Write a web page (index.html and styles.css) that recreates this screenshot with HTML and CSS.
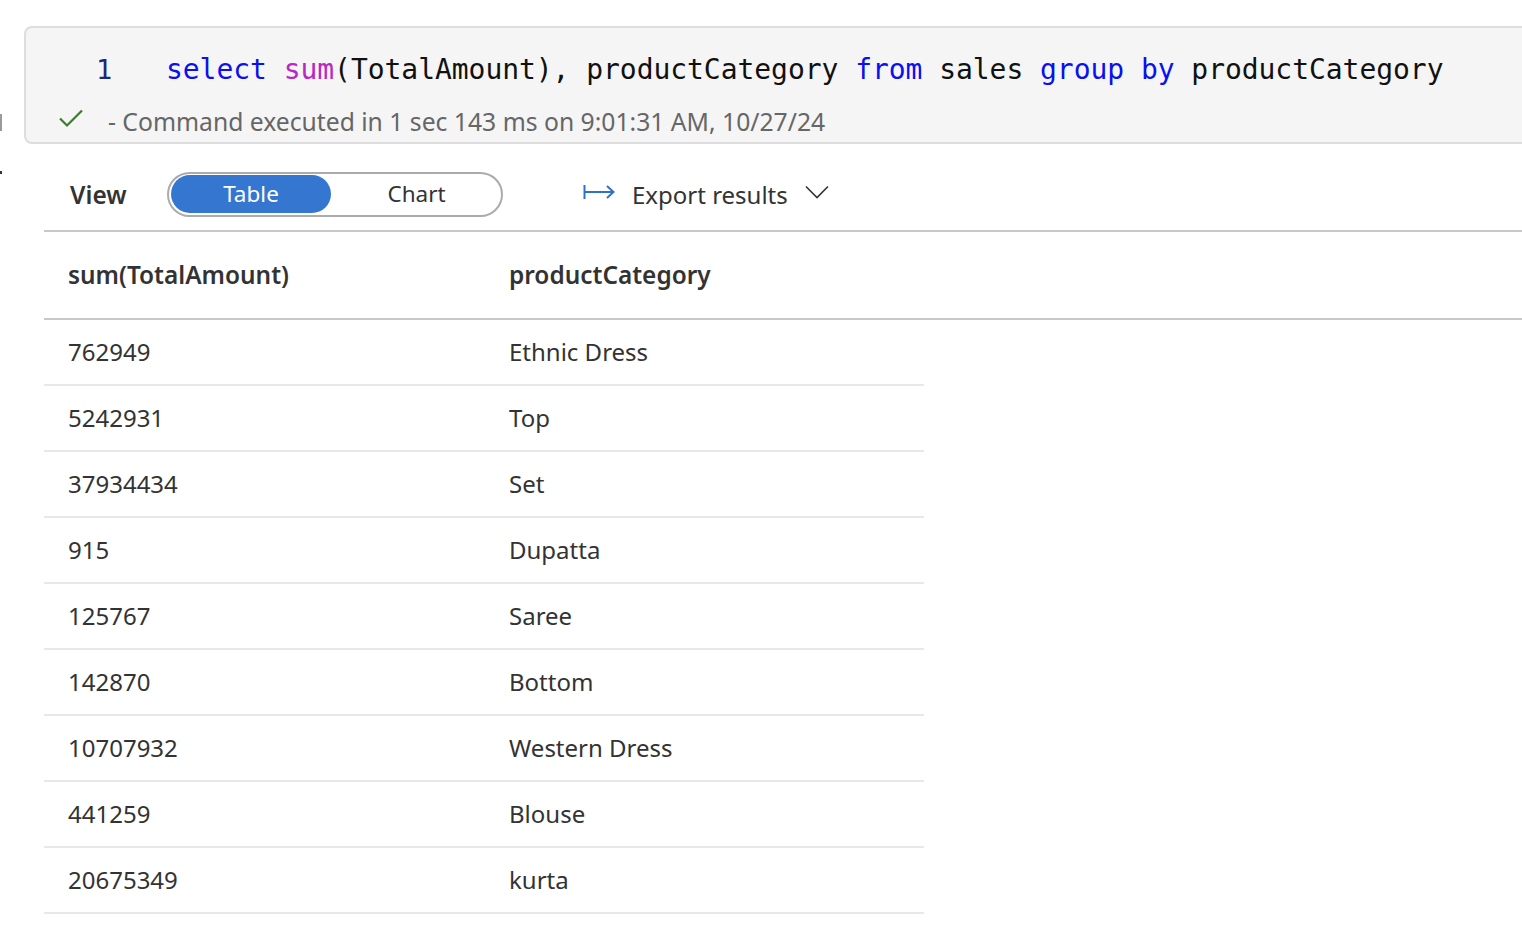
FILE: index.html
```html
<!DOCTYPE html>
<html>
<head>
<meta charset="utf-8">
<link rel="stylesheet" href="styles.css">
</head>
<body>
<div class="page">
  <span class="edge-mark edge-bar"></span>
  <span class="edge-mark edge-dot"></span>
  <div class="cell">
    <div class="code-line">
      <span class="line-no">1</span>
      <code class="code"><span class="kw">select</span> <span class="fn">sum</span>(TotalAmount), productCategory <span class="kw">from</span> sales <span class="kw">group</span> <span class="kw">by</span> productCategory</code>
    </div>
    <div class="status">
      <svg class="check" width="26" height="20" viewBox="0 0 26 20"><path d="M2 10.5 L9 17.5 L24 2.5" fill="none" stroke="#3a7d2c" stroke-width="2.2"/></svg>
      <span>- Command executed in 1 sec 143 ms on 9:01:31 AM, 10/27/24</span>
    </div>
  </div>
  <div class="results">
    <div class="toolbar">
      <span class="view-label">View</span>
      <div class="toggle">
        <span class="toggle-opt active">Table</span>
        <span class="toggle-opt">Chart</span>
      </div>
      <div class="export">
        <svg class="export-icon" width="32" height="16" viewBox="0 0 32 16"><path d="M1.5 1 V15 M1.5 8 H30 M24 2 L30.5 8 L24 14" fill="none" stroke="#2f72c9" stroke-width="2"/></svg>
        <span>Export results</span>
        <svg class="chev" width="24" height="14" viewBox="0 0 24 14"><path d="M1 1.5 L12 12.5 L23 1.5" fill="none" stroke="#333" stroke-width="1.6"/></svg>
      </div>
    </div>
    <div class="thead">
      <div class="th">sum(TotalAmount)</div>
      <div class="th">productCategory</div>
    </div>
    <div class="tbody">
      <div class="tr"><div class="td">762949</div><div class="td">Ethnic Dress</div></div>
      <div class="tr"><div class="td">5242931</div><div class="td">Top</div></div>
      <div class="tr"><div class="td">37934434</div><div class="td">Set</div></div>
      <div class="tr"><div class="td">915</div><div class="td">Dupatta</div></div>
      <div class="tr"><div class="td">125767</div><div class="td">Saree</div></div>
      <div class="tr"><div class="td">142870</div><div class="td">Bottom</div></div>
      <div class="tr"><div class="td">10707932</div><div class="td">Western Dress</div></div>
      <div class="tr"><div class="td">441259</div><div class="td">Blouse</div></div>
      <div class="tr"><div class="td">20675349</div><div class="td">kurta</div></div>
    </div>
  </div>
</div>
</body>
</html>
```

FILE: styles.css
```css
html, body {
  margin: 0;
  padding: 0;
  background: #fff;
}
body {
  font-family: "Noto Sans", "Open Sans", sans-serif;
  color: #333;
  overflow: hidden;
}
.page {
  position: relative;
  width: 1522px;
  height: 942px;
  padding-top: 26px;
  box-sizing: border-box;
}
.edge-mark {
  position: absolute;
  left: 0;
  background: #888;
}
.edge-bar {
  top: 114px;
  width: 2px;
  height: 17px;
  background: #9a9a9a;
}
.edge-dot {
  top: 171px;
  width: 2px;
  height: 3px;
  background: #333;
}
.cell {
  margin-left: 24px;
  height: 118px;
  box-sizing: border-box;
  background: #f5f5f5;
  border: 2px solid #dedede;
  border-right: none;
  border-radius: 8px 0 0 8px;
  padding-top: 25px;
}
.code-line {
  display: flex;
  align-items: baseline;
  height: 44px;
}
.line-no {
  width: 70px;
  padding-left: 70px;
  font-family: "DejaVu Sans Mono", monospace;
  font-size: 27px;
  color: #1e2678;
}
.code {
  font-family: "DejaVu Sans Mono", "Liberation Mono", monospace;
  font-size: 28px;
  color: #111;
  letter-spacing: -0.05px;
  white-space: pre;
}
.kw { color: #0a10f0; }
.fn { color: #b829c0; }
.status {
  display: flex;
  align-items: center;
  height: 40px;
  margin-top: 4px;
  padding-left: 32px;
  font-size: 24.7px;
  color: #666;
}
.check {
  margin-right: 24px;
  margin-top: -6px;
}
.results {
  margin-left: 44px;
}
.toolbar {
  display: flex;
  align-items: center;
  height: 72px;
  padding-top: 14px;
  border-bottom: 2px solid #c8c8c8;
  padding-left: 26px;
}
.view-label {
  font-weight: 600;
  font-size: 24.5px;
  color: #333;
  width: 97px;
}
.toggle {
  display: flex;
  align-items: center;
  width: 336px;
  height: 45px;
  box-sizing: border-box;
  border: 2px solid #ababab;
  border-radius: 23px;
  padding: 0 2px;
}
.toggle-opt {
  flex: 1;
  text-align: center;
  font-size: 22.5px;
  color: #333;
  line-height: 38px;
  padding-left: 3px;
}
.toggle-opt.active {
  flex: 0 0 160px;
  padding-left: 0;
  background: #3577d0;
  color: #fff;
  border-radius: 19px;
}
.export {
  display: flex;
  align-items: center;
  margin-left: 80px;
  font-size: 24px;
  color: #333;
}
.export-icon {
  margin-right: 17px;
  margin-top: -4px;
}
.chev {
  margin-left: 17px;
  margin-top: -4px;
}
.thead {
  display: grid;
  grid-template-columns: 441px 1fr;
  height: 86px;
  align-items: center;
  border-bottom: 2px solid #c8c8c8;
}
.th {
  padding-left: 24px;
  font-weight: 600;
  font-size: 24.4px;
  color: #333;
  margin-top: -2px;
}
.tbody {
  width: 880px;
}
.tr {
  display: grid;
  grid-template-columns: 441px 1fr;
  height: 64px;
  align-items: center;
  border-bottom: 2px solid #e8e8e8;
}
.td {
  padding-left: 24px;
  font-size: 24px;
  color: #333;
  margin-top: -2px;
}
```
